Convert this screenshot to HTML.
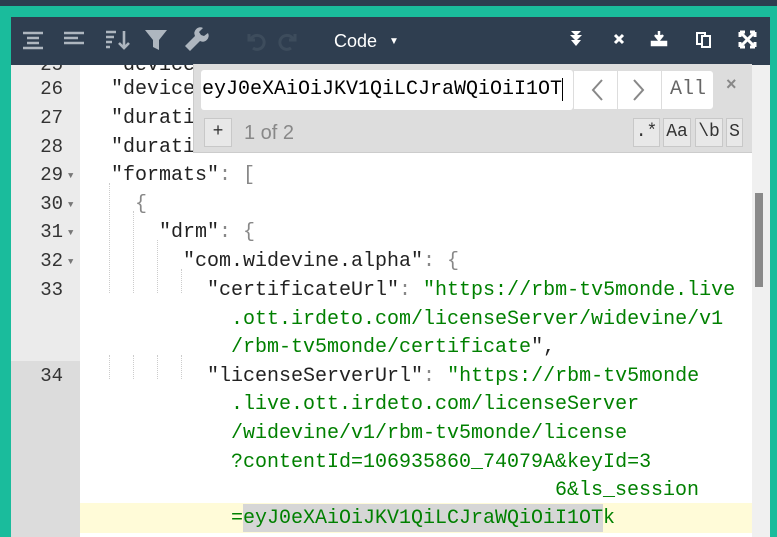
<!DOCTYPE html>
<html><head><style>
*{margin:0;padding:0;box-sizing:border-box}
body{width:777px;height:537px;overflow:hidden;background:#1abc9c;position:relative;font-family:"Liberation Mono",monospace}
.top{position:absolute;left:0;top:0;width:777px;height:6px;background:#2c3e50}
.tb{position:absolute;left:11px;top:17px;width:759px;height:48px;background:#2f3e50}
.ed{position:absolute;left:11px;top:65px;width:759px;height:472px;background:#fff;overflow:hidden}
.gut{position:absolute;left:0;top:0;width:69px;height:472px;background:#ebebeb}
.ln{position:absolute;left:0;width:52px;text-align:right;font-size:19px;color:#333;height:29px;line-height:29px}
.fa{position:absolute;left:57px;font-size:9px;color:#777}
.cl{position:absolute;white-space:pre;font-size:20px;line-height:29px;height:29px;color:#222}
.s{color:#008000}.p{color:#888}
.ig{position:absolute;width:0;border-left:1px dotted #ccc}
.ic{position:absolute;color:#fff;font-family:"Liberation Sans",sans-serif}
.find{position:absolute;left:193px;top:64px;width:559px;height:89px;background:#ddd;border-left:1px solid #ccc;border-bottom:1px solid #ccc}
.btn{position:absolute;border:1px solid #c8c8c8;background:#e8e8e8;font-size:18px;color:#333;text-align:center;line-height:27px;height:29px}
</style></head><body>
<div class="top"></div>
<div class="tb">
 <svg width="759" height="48" style="position:absolute;left:0;top:0">
  <g stroke="#aeb6bf" stroke-width="2.6" fill="none">
   <path d="M12 16h20M16 21h12M16 26h12M12 31h20"/>
   <path d="M53 16h20M53 21h14M53 26h20"/>
   <path d="M95 15h10M95 20h8M95 25h6M95 30h4"/>
   <path d="M113 14v17M108 26l5 5 5-5"/>
  </g>
  <path d="M134 13h22l-8 10v10l-6-3v-7z" fill="#aeb6bf"/>
  <path d="M178 33l10-10a6 6 0 0 1 8-8l-4 4 2 3 3 1 4-3a6 6 0 0 1-8 8l-10 10z" fill="#aeb6bf" transform="translate(-4,-4)"/>
  <path d="M240 22a7 7 0 1 1 2 9M238 17v6h6" stroke="#3d4c5c" stroke-width="3" fill="none"/>
  <path d="M282 22a7 7 0 1 0-2 9M284 17v6h-6" stroke="#3d4c5c" stroke-width="3" fill="none"/>
  <text x="323" y="30" fill="#fff" font-family="Liberation Sans" font-size="18">Code</text>
  <text x="378" y="27" fill="#fff" font-family="Liberation Sans" font-size="10">▼</text>
  <path d="M560 14h10l-5 5zM559 18h12l-6 6zM560 23h10l-5 6z" fill="#fff"/>
  <path d="M604 18l8 8M612 18l-8 8" stroke="#fff" stroke-width="3"/>
  <path d="M648 14v8M644 18l4 5 4-5M641 25h14v3h-14z" stroke="#fff" stroke-width="2.5" fill="#fff"/>
  <rect x="686" y="16" width="8" height="11" fill="none" stroke="#fff" stroke-width="2"/><rect x="691" y="19" width="8" height="11" fill="#2f3e50" stroke="#fff" stroke-width="2"/>
  <path d="M730 16l13 13M743 16l-13 13M729 15h5M729 15v5M744 15h-5M744 15v5M729 30h5M729 30v-5M744 30h-5M744 30v-5" stroke="#fff" stroke-width="3"/>
 </svg>
</div>
<div class="ed">
 <div class="gut"></div>
 <div style="position:absolute;left:69px;top:438px;width:672px;height:30px;background:#fffbd8"></div>
 <div style="position:absolute;left:0;top:296px;width:69px;height:176px;background:#dcdcdc"></div>
 <div style="position:absolute;left:741px;top:0;width:18px;height:472px;background:#f0f0f0"></div>
 <div style="position:absolute;left:744px;top:128px;width:8px;height:94px;background:#8a8a8a"></div>
 <div style="position:absolute;left:232px;top:439px;width:360px;height:28px;background:#d6d6d6"></div>
 <div class="ln" style="top:-14px">25</div>
 <div class="ln" style="top:10px">26</div><div class="ln" style="top:39px">27</div><div class="ln" style="top:68px">28</div>
 <div class="ln" style="top:96px">29</div><div class="fa" style="top:106px">▼</div>
 <div class="ln" style="top:125px">30</div><div class="fa" style="top:135px">▼</div>
 <div class="ln" style="top:153px">31</div><div class="fa" style="top:163px">▼</div>
 <div class="ln" style="top:182px">32</div><div class="fa" style="top:192px">▼</div>
 <div class="ln" style="top:211px">33</div>
 <div class="ln" style="top:297px">34</div>
 <div class="ig" style="left:98px;top:118px;height:110px"></div>
 <div class="ig" style="left:122px;top:146px;height:82px"></div>
 <div class="ig" style="left:146px;top:175px;height:53px"></div>
 <div class="ig" style="left:170px;top:204px;height:24px"></div>
 <div class="ig" style="left:98px;top:290px;height:24px"></div><div class="ig" style="left:122px;top:290px;height:24px"></div><div class="ig" style="left:146px;top:290px;height:24px"></div><div class="ig" style="left:170px;top:290px;height:24px"></div>
 <div class="cl" style="left:100px;top:-14px">"devices</div>
 <div class="cl" style="left:100px;top:10px">"device</div>
 <div class="cl" style="left:100px;top:39px">"durati</div>
 <div class="cl" style="left:100px;top:68px">"durati</div>
 <div class="cl" style="left:100px;top:96px">"formats"<span class="p">: [</span></div>
 <div class="cl" style="left:124px;top:125px"><span class="p">{</span></div>
 <div class="cl" style="left:148px;top:153px">"drm"<span class="p">: {</span></div>
 <div class="cl" style="left:172px;top:182px">"com.widevine.alpha"<span class="p">: {</span></div>
 <div class="cl" style="left:196px;top:211px">"certificateUrl"<span class="p">: </span><span class="s">"https://rbm-tv5monde.live</span></div>
 <div class="cl s" style="left:220px;top:240px">.ott.irdeto.com/licenseServer/widevine/v1</div>
 <div class="cl s" style="left:220px;top:268px">/rbm-tv5monde/certificate<span style="color:#222">",</span></div>
 <div class="cl" style="left:196px;top:297px">"licenseServerUrl"<span class="p">: </span><span class="s">"https://rbm-tv5monde</span></div>
 <div class="cl s" style="left:220px;top:325px">.live.ott.irdeto.com/licenseServer</div>
 <div class="cl s" style="left:220px;top:354px">/widevine/v1/rbm-tv5monde/license</div>
 <div class="cl s" style="left:220px;top:383px">?contentId=106935860_74079A&amp;keyId=3</div>
 <div class="cl s" style="left:544px;top:411px">6&amp;ls_session</div>
 <div class="cl s" style="left:220px;top:439px">=eyJ0eXAiOiJKV1QiLCJraWQiOiI1OTk</div>
</div>
<div class="find">
 <div style="position:absolute;left:7px;top:6px;width:372px;height:40px;background:#fff;border-radius:3px"></div>
 <div style="position:absolute;left:8px;top:6px;font-size:20px;line-height:40px;white-space:pre;color:#000">eyJ0eXAiOiJKV1QiLCJraWQiOiI1OT<span style="border-left:1px solid #000"></span></div>
 <div style="position:absolute;left:379px;top:6px;width:141px;height:40px;background:#fff;border:1px solid #ddd;border-radius:0 4px 4px 0"></div>
 <div style="position:absolute;left:423px;top:6px;width:1px;height:40px;background:#ddd"></div>
 <div style="position:absolute;left:467px;top:6px;width:1px;height:40px;background:#ddd"></div>
 <svg width="130" height="40" style="position:absolute;left:380px;top:6px"><path d="M28 10l-9 10 9 10M60 10l9 10-9 10" stroke="#888" stroke-width="2" fill="none"/></svg>
 <div style="position:absolute;left:476px;top:6px;font-size:20px;line-height:40px;color:#666">All</div>
 <div style="position:absolute;left:532px;top:10px;font-size:18px;color:#888;font-family:'Liberation Sans';font-weight:bold">×</div>
 <div class="btn" style="left:10px;top:54px;width:28px">+</div>
 <div style="position:absolute;left:50px;top:55px;font-size:20px;line-height:28px;color:#888;font-family:'Liberation Sans'">1 of 2</div>
 <div class="btn" style="left:439px;top:54px;width:27px">.*</div>
 <div class="btn" style="left:469px;top:54px;width:28px">Aa</div>
 <div class="btn" style="left:501px;top:54px;width:28px">\b</div>
 <div class="btn" style="left:532px;top:54px;width:17px">S</div>
</div>
</body></html>
